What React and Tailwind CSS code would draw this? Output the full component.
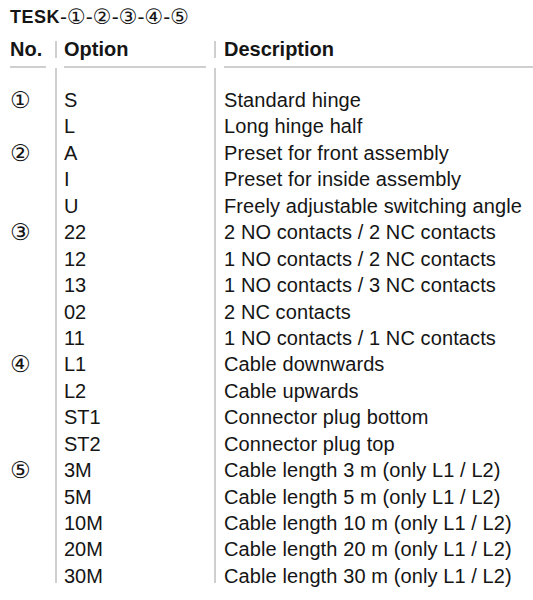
const rows = [
  { no: '①', opt: 'S', desc: 'Standard hinge' },
  { no: '', opt: 'L', desc: 'Long hinge half' },
  { no: '②', opt: 'A', desc: 'Preset for front assembly' },
  { no: '', opt: 'I', desc: 'Preset for inside assembly' },
  { no: '', opt: 'U', desc: 'Freely adjustable switching angle' },
  { no: '③', opt: '22', desc: '2 NO contacts / 2 NC contacts' },
  { no: '', opt: '12', desc: '1 NO contacts / 2 NC contacts' },
  { no: '', opt: '13', desc: '1 NO contacts / 3 NC contacts' },
  { no: '', opt: '02', desc: '2 NC contacts' },
  { no: '', opt: '11', desc: '1 NO contacts / 1 NC contacts' },
  { no: '④', opt: 'L1', desc: 'Cable downwards' },
  { no: '', opt: 'L2', desc: 'Cable upwards' },
  { no: '', opt: 'ST1', desc: 'Connector plug bottom' },
  { no: '', opt: 'ST2', desc: 'Connector plug top' },
  { no: '⑤', opt: '3M', desc: 'Cable length 3 m (only L1 / L2)' },
  { no: '', opt: '5M', desc: 'Cable length 5 m (only L1 / L2)' },
  { no: '', opt: '10M', desc: 'Cable length 10 m (only L1 / L2)' },
  { no: '', opt: '20M', desc: 'Cable length 20 m (only L1 / L2)' },
  { no: '', opt: '30M', desc: 'Cable length 30 m (only L1 / L2)' },
];

export default function App() {
  return (
    <div className="w-[533px] h-[600px] bg-white text-[#151515] font-['Liberation_Sans','DejaVu_Sans',sans-serif] overflow-hidden">
      {/* Title */}
      <div className="h-[34px] pl-[10px] flex items-center text-[18px]">
        <span className="font-bold tracking-[0.5px]">TESK</span>
        <span className="text-[21px] leading-[20px]">-①-②-③-④-⑤</span>
      </div>

      {/* Header */}
      <div className="grid grid-cols-[55px_159px_1fr] h-[26px] items-center text-[20px] font-bold">
        <div className="pl-[10px]">No.</div>
        <div className="flex items-center">
          <span className="w-[2px] h-[17px] bg-[#cfcfcf]" />
          <span className="pl-[7px]">Option</span>
        </div>
        <div className="flex items-center">
          <span className="w-[2px] h-[17px] bg-[#cfcfcf]" />
          <span className="pl-[8px]">Description</span>
        </div>
      </div>

      {/* Rule */}
      <div className="grid grid-cols-[55px_159px_1fr] mt-[6px]">
        <div className="pl-[10px] pr-[9px]"><div className="h-[2px] bg-[#cfcfcf]" /></div>
        <div className="pl-[9px] pr-[8px]"><div className="h-[2px] bg-[#cfcfcf]" /></div>
        <div className="pl-[10px]"><div className="h-[2px] bg-[#cfcfcf]" /></div>
      </div>

      {/* Body */}
      <div className="grid grid-cols-[55px_159px_1fr] grid-rows-[515px] text-[20px] leading-[26.45px]">
        <div className="pl-[10px] pt-[19px] text-[23px]">
          {rows.map((r, i) => (
            <div key={i} className="h-[26.45px] leading-[26.45px]">{r.no}</div>
          ))}
        </div>
        <div className="border-l-2 border-[#cfcfcf] pl-[7px] pt-[19px]">
          {rows.map((r, i) => (
            <div key={i} className="h-[26.45px]">{r.opt}</div>
          ))}
        </div>
        <div className="border-l-2 border-[#cfcfcf] pl-[8px] pt-[19px] whitespace-nowrap tracking-[0.1px]">
          {rows.map((r, i) => (
            <div key={i} className="h-[26.45px]">{r.desc}</div>
          ))}
        </div>
      </div>
    </div>
  );
}
